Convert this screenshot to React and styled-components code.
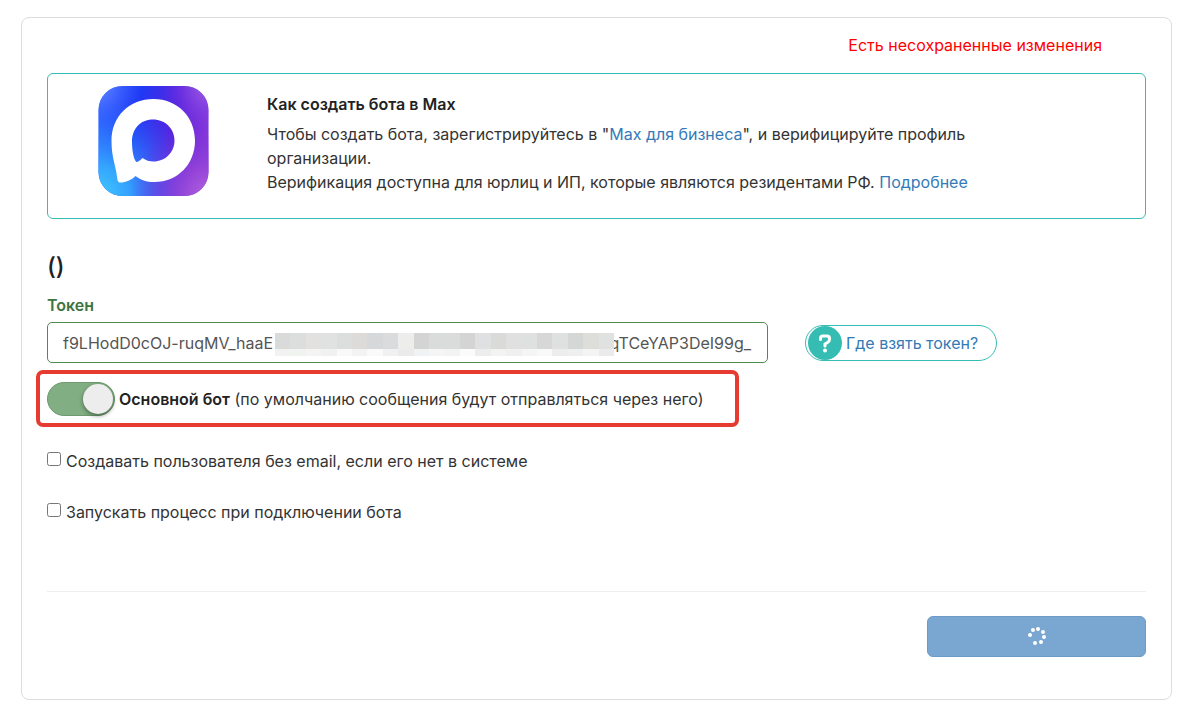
import React, { useState } from 'react'
import styled, { createGlobalStyle } from 'styled-components'

const mosaicTop = [
  '#d9dbdb', '#dcdddd', '#e2e1e0', '#e0e1e1', '#dcdddd', '#dddbda', '#d6d8da', '#dadbdc', '#ededec', '#d4d4d4', '#dadcdb',
  '#dadcdb', '#d4d4d4', '#dfe0e2', '#dadad9', '#dfe0df', '#dfe0e0', '#d7d7d7', '#dfe0e0', '#d5d6d6', '#dddeda', '#e0e1e1',
]
const mosaicBottom = [
  '#f1f2f1', '#f1f3f1', '#f3f4f3', '#f1f1f1', '#f9f9f9', '#f3f3f3', '#fafafa', '#f1f1f1', '#eaebea', '#f1f2f3', '#f4f5f4',
  '#f3f3f3', '#fbfbfb', '#ededed', '#f2f3f2', '#eff0ef', '#f5f5f5', '#f9f9f9', '#ededed', '#eeefef', '#f4f4f4', '#ebebeb',
]

const TOKEN = 'f9LHodD0cOJ-ruqMV_haaE' + '\u2007'.repeat(32) + '\u00a0qTCeYAP3DeI99g_'

// white dots of the loader, one gap left on the ring
const loaderDots = [
  [3, 8], [6, 3], [11, 2], [16, 5], [17, 10], [14, 15], [8, 16],
]

function MaxLogo() {
  return (
    <Logo viewBox="0 0 110 110" role="img" aria-label="Max">
      <defs>
        <linearGradient id="base" x1="0" y1="0.2" x2="1" y2="0.4">
          <stop offset="0" stopColor="#2f62ff" />
          <stop offset="0.35" stopColor="#2038f4" />
          <stop offset="0.7" stopColor="#5a24de" />
          <stop offset="1" stopColor="#8a38d8" />
        </linearGradient>
        <radialGradient id="cyan" cx="0.02" cy="0.98" r="0.85">
          <stop offset="0" stopColor="#41c6ff" />
          <stop offset="0.3" stopColor="#35aeff" stopOpacity="0.9" />
          <stop offset="1" stopColor="#2a70ff" stopOpacity="0" />
        </radialGradient>
        <radialGradient id="pink" cx="1" cy="1" r="0.7">
          <stop offset="0" stopColor="#b566dc" />
          <stop offset="0.4" stopColor="#9544d8" stopOpacity="0.8" />
          <stop offset="1" stopColor="#6a28dd" stopOpacity="0" />
        </radialGradient>
        <radialGradient id="shineLeft" cx="0" cy="0" r="0.4">
          <stop offset="0" stopColor="#6688ff" />
          <stop offset="1" stopColor="#3050ff" stopOpacity="0" />
        </radialGradient>
        <radialGradient id="shineRight" cx="1" cy="0" r="0.42">
          <stop offset="0" stopColor="#a362e8" />
          <stop offset="1" stopColor="#7030e0" stopOpacity="0" />
        </radialGradient>
      </defs>
      {['base', 'cyan', 'pink', 'shineLeft', 'shineRight'].map((id) => (
        <rect key={id} width="110" height="110" rx="24" fill={`url(#${id})`} />
      ))}
      <path
        fill="#fff"
        fillRule="evenodd"
        d="M55 13C79 13 96.500 31 96.500 54.500C96.500 78.500 79 96 56 96C47 96 43 94 37 90C33 94 27 96.500 22 96.500C19.500 96.500 19 95 18.500 91C17.500 80 13 72 13 55C13 30 31 13 55 13ZM54.500 33.500C41.500 33.500 33.500 43 33.500 56C33.500 65 35.500 74.500 38 76C39.500 76.500 42.500 73.500 44 72C47.500 74.500 50.500 75.500 55 75.500C67 75.500 76 66 76 54.500C76 43 67 33.500 54.500 33.500Z"
      />
    </Logo>
  )
}

function App() {
  const [token, setToken] = useState(TOKEN)
  const [mainBot, setMainBot] = useState(true)

  return (
    <>
      <GlobalStyle />
      <Card>
        <Warning>Есть несохраненные изменения</Warning>
        <Info>
          <MaxLogo />
          <InfoText>
            <h4>Как создать бота в Max</h4>
            <p>
              Чтобы создать бота, зарегистрируйтесь в "<a href="#business">Max для бизнеса</a>", и верифицируйте профиль
              <br />
              организации.
              <br />
              Верификация доступна для юрлиц и ИП, которые являются резидентами РФ. <a href="#more">Подробнее</a>
            </p>
          </InfoText>
        </Info>
        <Title>()</Title>
        <TokenLabel htmlFor="token">Токен</TokenLabel>
        <TokenRow>
          <TokenField>
            <TokenInput id="token" value={token} onChange={(e) => setToken(e.target.value)} />
            <Mosaic>
              {mosaicTop.map((color, i) => <Tile key={i} $color={color} />)}
              {mosaicBottom.map((color, i) => <Tile key={i} $color={color} />)}
            </Mosaic>
          </TokenField>
          <Help href="#token-help">
            <HelpIcon viewBox="0 0 34 34" aria-hidden="true">
              <circle cx="17" cy="17" r="17" fill="#36bdb3" />
              <path d="M12.500 13.500V12.500Q12.500 10 15 10H19Q21.500 10 21.500 12.500V13.500Q21.500 15.500 19.500 16.500L17 18V20" fill="none" stroke="#fff" strokeWidth="3" strokeLinecap="round" />
              <circle cx="17" cy="24.500" r="2" fill="#fff" />
            </HelpIcon>
            Где взять токен?
          </Help>
        </TokenRow>
        <Highlight>
          <Switch type="checkbox" id="main-bot" checked={mainBot} onChange={() => setMainBot(!mainBot)} />
          <label htmlFor="main-bot"><b>Основной бот</b> (по умолчанию сообщения будут отправляться через него)</label>
        </Highlight>
        <Options>
          <Option>
            <Checkbox type="checkbox" />
            Создавать пользователя без email, если его нет в системе
          </Option>
          <Option>
            <Checkbox type="checkbox" />
            Запускать процесс при подключении бота
          </Option>
        </Options>
        <Footer>
          <SaveButton aria-label="Сохранить">
            <Loader viewBox="0 0 20 20" aria-hidden="true">
              {loaderDots.map(([x, y]) => <circle key={`${x}-${y}`} cx={x} cy={y} r="2" fill="#fff" />)}
            </Loader>
          </SaveButton>
        </Footer>
      </Card>
    </>
  )
}

export default App

const GlobalStyle = createGlobalStyle`
  * {
    box-sizing: border-box;
  }

  body {
    margin: 0;
    background: #fff;
    color: #333;
    font-family: Inter, "Open Sans", sans-serif;
    font-size: 16px;
    line-height: 24px;
  }

  a {
    color: #337ab7;
    text-decoration: none;
  }
`
const Card = styled.main`
  margin: 17px 28px 10px 21px;
  padding: 15px 25px 42px;
  border: 1px solid #ddd;
  border-radius: 8px;
`
const Warning = styled.div`
  padding-right: 44px;
  color: #f00;
  text-align: right;
`
const Info = styled.section`
  display: flex;
  align-items: flex-start;
  margin-top: 16px;
  padding: 12px 50px 22px;
  border: 1px solid #36bdb3;
  border-radius: 6px;
`
const Logo = styled.svg`
  flex: none;
  width: 111px;
  height: 110px;
`
const InfoText = styled.div`
  max-width: 792px;
  padding: 6px 0 0 58px;

  h4 {
    margin: 0 0 6px;
    font-size: 16px;
    font-weight: 600;
    color: #222;
  }

  p {
    margin: 0;
  }
`
const Title = styled.h2`
  margin: 36px 0 14px;
  font-size: 24px;
  font-weight: 500;
  line-height: 24px;
  color: #222;
`
const TokenLabel = styled.label`
  display: block;
  margin-bottom: 5px;
  font-weight: 600;
  color: #3c763d;
`
const TokenRow = styled.div`
  display: flex;
  align-items: center;
  gap: 37px;
`
const TokenField = styled.div`
  position: relative;
  flex: 0 1 721px;
`
const TokenInput = styled.input`
  display: block;
  width: 100%;
  height: 41px;
  padding: 0 8px 0 15px;
  border: 1px solid #4f8a50;
  border-radius: 5px;
  color: #555;
  font: inherit;
`
const Mosaic = styled.div`
  position: absolute;
  top: 11px;
  left: 228px;
  width: 339px;
  display: grid;
  grid-template-columns: repeat(22, 1fr);
  grid-template-rows: 16px 7px;
  pointer-events: none;
`
const Tile = styled.span`
  background: ${props => props.$color};
`
const Help = styled.a`
  display: flex;
  align-items: center;
  gap: 4px;
  height: 36px;
  padding: 0 18px 0 2px;
  border: 1px solid #36bdb3;
  border-radius: 18px;
  white-space: nowrap;
`
const HelpIcon = styled.svg`
  width: 34px;
  height: 34px;
`
const Highlight = styled.div`
  display: flex;
  align-items: center;
  gap: 4px;
  width: fit-content;
  height: 57px;
  margin: 7px 0 0 -11px;
  padding: 0 32px 0 7px;
  border: 4px solid #e63b31;
  border-radius: 7px;

  label {
    color: #333;
  }

  b {
    font-weight: 600;
    color: #222;
  }
`
const Switch = styled.input`
  appearance: none;
  flex: none;
  display: flex;
  align-items: center;
  justify-content: ${props => props.checked ? 'flex-end' : 'flex-start'};
  width: 68px;
  height: 34px;
  margin: 0;
  padding: 0 1px;
  border: 1px solid #6d9a6e;
  border-radius: 17px;
  background: ${props => props.checked ? '#81ae82' : '#ccc'};
  cursor: pointer;

  &::before {
    content: '';
    width: 30px;
    height: 30px;
    border-radius: 50%;
    background: #ededed;
    box-shadow: 0 2px 4px rgba(0, 0, 0, .4);
  }
`
const Options = styled.div`
  display: flex;
  flex-direction: column;
  gap: 27px;
  margin-top: 22px;
`
const Option = styled.label`
  display: flex;
  align-items: center;
  gap: 5px;
`
const Checkbox = styled.input`
  width: 14px;
  height: 14px;
  margin: 0 0 4px;
`
const Footer = styled.div`
  display: flex;
  justify-content: flex-end;
  margin-top: 67px;
  padding-top: 24px;
  border-top: 1px solid #eee;
`
const SaveButton = styled.button`
  display: flex;
  align-items: center;
  justify-content: center;
  width: 219px;
  height: 41px;
  border: 1px solid #6a9bc9;
  border-radius: 6px;
  background: #7aa7d1;
`
const Loader = styled.svg`
  width: 20px;
  height: 20px;
`
